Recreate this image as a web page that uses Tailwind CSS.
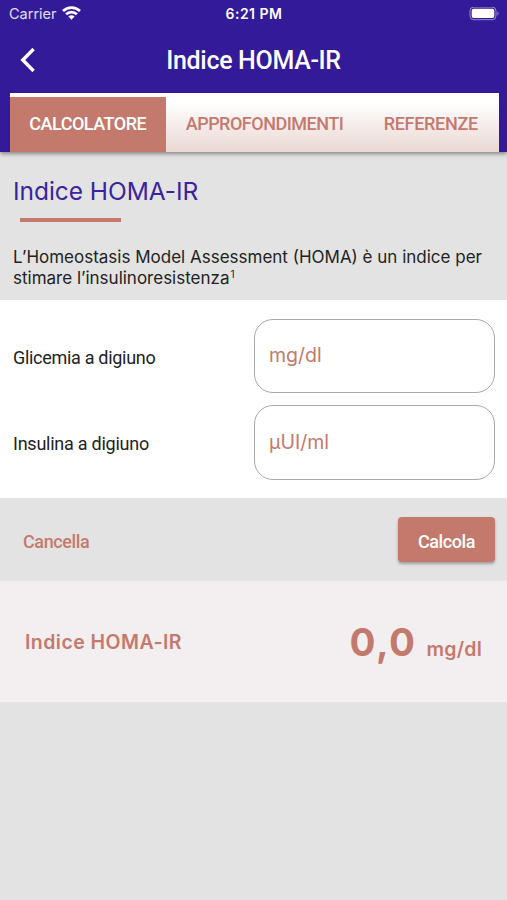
<!DOCTYPE html>
<html lang="it">
<head>
<meta charset="utf-8">
<title>Indice HOMA-IR</title>
<script src="https://cdn.jsdelivr.net/npm/@tailwindcss/browser@4"></script>
</head>
<body class="h-[900px] w-[507px] overflow-hidden bg-[#e3e3e3] font-['Inter',sans-serif] text-[#222]">
<header class="relative flex h-[152px] flex-col bg-[#321a98] text-white shadow-[0_2px_4px_rgba(0,0,0,0.4)]">
  <div class="grid h-7 grid-cols-3 items-center pr-2 pl-[9px]">
    <div class="flex items-center gap-[5px] text-[14.500px] leading-7 text-white/85">
      <span>Carrier</span>
      <svg class="-mt-[2px] h-[14px] w-[19px]" viewBox="0 0 19 14" fill="none" stroke="#fff" stroke-width="2.7"><path d="M1 5a12.2 12.2 0 0 1 17 0M4.1 8.2a7.8 7.8 0 0 1 10.800 0"/><path d="M9.500 13.700 6.400 10.600a4.400 4.400 0 0 1 6.200 0Z" fill="#fff" stroke="none"/></svg>
    </div>
    <div class="text-center text-[14px] leading-7 font-semibold tracking-[0.5px]">6:21 PM</div>
    <svg class="h-[14px] w-[30px] justify-self-end" viewBox="0 0 30 14" fill="none"><rect x="1" y=".1" width="26" height="12.600" rx="3.800" stroke="#fff" stroke-opacity=".5"/><rect x="2.700" y="1.800" width="22.600" height="9.200" rx="2" fill="#fff"/><path d="M28.400 4.300q2.200 2.200 0 4.400Z" fill="#fff" fill-opacity=".5"/></svg>
  </div>
  <div class="grid h-[65.500px] grid-cols-[60px_1fr_60px] items-center">
    <svg class="-mt-[2px] ml-5 h-6 w-4" viewBox="0 0 16 24" fill="none" stroke="#fff" stroke-width="3.400"><path d="M13.600 1 2.800 12l10.800 11"/></svg>
    <h1 class="text-center font-['Roboto',sans-serif] text-[25px] font-medium tracking-[-0.33px]">Indice HOMA-IR</h1>
  </div>
  <nav class="mr-[8.5px] ml-[9.500px] flex h-[59px] shrink-0 bg-linear-to-b from-white from-15% to-[#ead7d3] pt-1 font-['Roboto',sans-serif] text-[18px] font-medium tracking-[-0.5px] text-[#c37a6d]">
    <div class="flex w-[156.500px] items-center justify-center bg-[#c37a6d] pb-[2px] text-white">CALCOLATORE</div>
    <div class="flex w-[197px] items-center justify-center pb-[2px]">APPROFONDIMENTI</div>
    <div class="flex flex-1 items-center justify-center pb-[2px] tracking-[-0.3px]">REFERENZE</div>
  </nav>
</header>
<main>
  <section class="h-[148px] px-[13px] pt-[21px]">
    <h2 class="text-[24.500px] leading-[36px] tracking-[-0.05px] text-[#3a24a0]">Indice HOMA-IR</h2>
    <div class="mt-[9px] ml-[6.500px] h-1 w-[101px] bg-[#c37a6d]"></div>
    <p class="mt-[24.500px] text-[17px] leading-[21px] whitespace-nowrap">L’Homeostasis Model Assessment (HOMA) è un indice per<br>stimare l’insulinoresistenza<span class="relative -top-[6px] ml-px text-[10px] leading-none text-[#222]">1</span></p>
  </section>
  <section class="flex h-[198px] flex-col gap-3 bg-white pt-[18.500px] pr-[12px] pl-[13px]">
    <label class="flex items-center justify-between"><span class="pt-[3px] font-['Roboto',sans-serif] text-[18px] tracking-[-0.3px]">Glicemia a digiuno</span><span class="flex h-[74.500px] w-[241px] items-center rounded-[19px] border border-[#a5aaac] pl-[14px] text-[19.500px] text-[#c37a6d]">mg/dl</span></label>
    <label class="flex items-center justify-between"><span class="pt-[3px] font-['Roboto',sans-serif] text-[18px] tracking-[-0.25px]">Insulina a digiuno</span><span class="flex h-[74.500px] w-[241px] items-center rounded-[19px] border border-[#a5aaac] pt-px pl-[14px] text-[19.500px] text-[#c37a6d]">μUI/ml</span></label>
  </section>
  <section class="flex h-[83px] items-center justify-between pr-3 pl-[23px] font-['Roboto',sans-serif] text-[18px] font-medium tracking-[-0.4px]">
    <span class="pt-[3px] text-[#c37a6d]">Cancella</span>
    <button class="h-[45px] w-[97px] rounded-[4px] bg-[#c37a6d] pt-[3px] tracking-[-0.4px] text-white shadow-[0_2px_3px_rgba(0,0,0,0.3)]">Calcola</button>
  </section>
  <section class="flex h-[121px] items-start justify-between bg-[#f3eff0] pt-[36px] pr-[25px] pl-[25px] font-semibold text-[#c37a6d]">
    <span class="mt-[10px] text-[19.500px] leading-[30px] tracking-[0.45px]">Indice HOMA-IR</span>
    <span class="flex items-baseline gap-[10px]"><span class="text-[38.500px] leading-[50px] font-bold tracking-[1.500px]">0,0</span><span class="text-[19.500px] tracking-[0.2px]">mg/dl</span></span>
  </section>
</main>
</body>
</html>
